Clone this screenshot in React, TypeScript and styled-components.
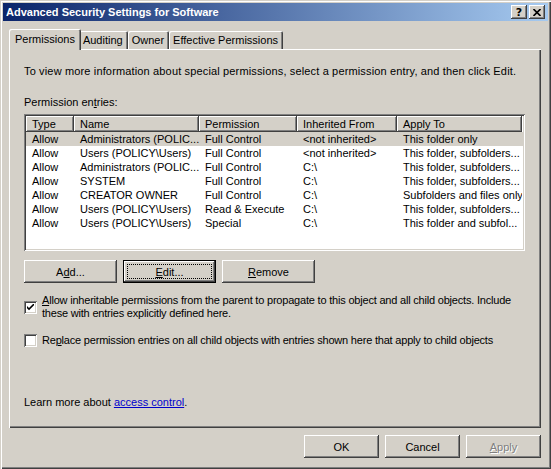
import React from "react";
import styled, { createGlobalStyle, css } from "styled-components";

const face = "#d4d0c8";
const raised = `inset -1px -1px #404040, inset 1px 1px #ffffff, inset -2px -2px #808080, inset 2px 2px ${face}`;
const sunken = `inset 1px 1px #808080, inset -1px -1px #ffffff, inset 2px 2px #404040, inset -2px -2px ${face}`;

const GlobalStyle = createGlobalStyle`
  html, body {
    margin: 0;
    padding: 0;
    background: ${face};
  }
  body {
    font-family: "Liberation Sans", Arial, sans-serif;
    font-size: 11px;
    color: #000;
  }
`;

type Entry = {
  type: string;
  name: string;
  permission: string;
  inherited: string;
  applyTo: string;
};

const entries: Entry[] = [
  { type: "Allow", name: "Administrators (POLIC...", permission: "Full Control", inherited: "<not inherited>", applyTo: "This folder only" },
  { type: "Allow", name: "Users (POLICY\\Users)", permission: "Full Control", inherited: "<not inherited>", applyTo: "This folder, subfolders..." },
  { type: "Allow", name: "Administrators (POLIC...", permission: "Full Control", inherited: "C:\\", applyTo: "This folder, subfolders..." },
  { type: "Allow", name: "SYSTEM", permission: "Full Control", inherited: "C:\\", applyTo: "This folder, subfolders..." },
  { type: "Allow", name: "CREATOR OWNER", permission: "Full Control", inherited: "C:\\", applyTo: "Subfolders and files only" },
  { type: "Allow", name: "Users (POLICY\\Users)", permission: "Read & Execute", inherited: "C:\\", applyTo: "This folder, subfolders..." },
  { type: "Allow", name: "Users (POLICY\\Users)", permission: "Special", inherited: "C:\\", applyTo: "This folder and subfol..." },
];

const columns = ["Type", "Name", "Permission", "Inherited From", "Apply To"];

const App = () => {
  return (
    <>
      <GlobalStyle />
      <Window>
        <TitleBar>
          <Title>Advanced Security Settings for Software</Title>
          <CaptionButton aria-label="Help">
            <HelpGlyph>?</HelpGlyph>
          </CaptionButton>
          <CaptionButton aria-label="Close" $gap>
            <svg width="8" height="7" viewBox="0 0 8 7">
              <path d="M0.5 0 L7.5 7 M7.5 0 L0.5 7" stroke="#000" strokeWidth="1.6" />
            </svg>
          </CaptionButton>
        </TitleBar>

        <Body>
          <TabStrip>
            <Tab $active>Permissions</Tab>
            <Tab>Auditing</Tab>
            <Tab>Owner</Tab>
            <Tab>Effective Permissions</Tab>
          </TabStrip>

          <Panel>
            <Intro>
              To view more information about special permissions, select a permission entry, and then click Edit.
            </Intro>
            <EntriesLabel>
              Permission en<u>t</u>ries:
            </EntriesLabel>

            <ListView>
              <ListRow>
                {columns.map((c) => (
                  <HeaderCell key={c}>{c}</HeaderCell>
                ))}
              </ListRow>
              {entries.map((e, i) => (
                <ListRow key={i} $selected={i === 0}>
                  <Cell>{e.type}</Cell>
                  <Cell>{e.name}</Cell>
                  <Cell>{e.permission}</Cell>
                  <Cell>{e.inherited}</Cell>
                  <Cell>{e.applyTo}</Cell>
                </ListRow>
              ))}
            </ListView>

            <ButtonRow>
              <PushButton $width={93}>
                A<u>d</u>d...
              </PushButton>
              <PushButton $width={93} $default>
                <u>E</u>dit...
              </PushButton>
              <PushButton $width={93}>
                <u>R</u>emove
              </PushButton>
            </ButtonRow>

            <CheckRow $top={11}>
              <CheckBox>
                <svg width="7" height="7" viewBox="0 0 7 7">
                  <path d="M0 2 L2 4 L7 -1 V1.2 L2 6.2 L0 4.2 Z" fill="#000" />
                </svg>
              </CheckBox>
              <CheckText>
                <u>A</u>llow inheritable permissions from the parent to propagate to this object and all child objects. Include
                <br />
                these with entries explicitly defined here.
              </CheckText>
            </CheckRow>

            <CheckRow $top={14}>
              <CheckBox />
              <CheckText>
                Re<u>p</u>lace permission entries on all child objects with entries shown here that apply to child objects
              </CheckText>
            </CheckRow>

            <LearnMore>
              Learn more about <Link href="#">access control</Link>.
            </LearnMore>
          </Panel>

          <Footer>
            <PushButton $width={75}>OK</PushButton>
            <PushButton $width={75}>Cancel</PushButton>
            <PushButton $width={75} disabled>
              <u>A</u>pply
            </PushButton>
          </Footer>
        </Body>
      </Window>
    </>
  );
};

const Window = styled.div`
  width: 551px;
  height: 469px;
  box-sizing: border-box;
  padding: 3px;
  background: ${face};
  box-shadow: inset 1px 1px ${face}, inset 2px 2px #ffffff, inset -1px -1px #404040, inset -2px -2px #808080;
  display: flex;
  flex-direction: column;
`;

const TitleBar = styled.div`
  height: 18px;
  flex: none;
  display: flex;
  align-items: center;
  padding: 0 3px 0 3px;
  background: linear-gradient(to right, #0a246a, #a6caf0);
  color: #fff;
  font-weight: bold;
  font-size: 11px;
`;

const Title = styled.span`
  flex: 1;
  white-space: nowrap;
  overflow: hidden;
`;

const CaptionButton = styled.button<{ $gap?: boolean }>`
  width: 16px;
  height: 14px;
  margin-left: ${(p) => (p.$gap ? "2px" : "0")};
  padding: 0;
  border: none;
  background: ${face};
  box-shadow: ${raised};
  display: flex;
  align-items: center;
  justify-content: center;
  color: #000;
`;

const HelpGlyph = styled.span`
  font-family: "DejaVu Sans", sans-serif;
  font-weight: bold;
  font-size: 11px;
  line-height: 11px;
`;

const Body = styled.div`
  flex: 1;
  display: flex;
  flex-direction: column;
  padding: 8px 7px 8px 6px;
`;

const TabStrip = styled.div`
  display: flex;
  align-items: flex-end;
  padding-left: 2px;
  height: 20px;
`;

const Tab = styled.div<{ $active?: boolean }>`
  box-sizing: border-box;
  height: 18px;
  padding: 2px 5px 0 4px;
  line-height: 14px;
  white-space: nowrap;
  background: ${face};
  border-radius: 2px 2px 0 0;
  box-shadow: inset 1px 1px #ffffff, inset -1px 0 #404040, inset -2px 0 #808080;

  ${(p) =>
    p.$active &&
    css`
      position: relative;
      z-index: 1;
      height: 21px;
      margin: 0 -2px -1px;
      padding: 3px 6px 0;
    `}
`;

const Panel = styled.div`
  flex: 1;
  display: flex;
  flex-direction: column;
  padding: 16px 16px 19px 15px;
  background: ${face};
  box-shadow: inset 1px 1px #ffffff, inset -1px -1px #404040, inset -2px -2px #808080;
`;

const Text = styled.div`
  line-height: 13px;
  white-space: nowrap;
`;

const Intro = styled(Text)`
  letter-spacing: 0.15px;
`;

const EntriesLabel = styled(Text)`
  margin-top: 18px;
`;

const ListView = styled.div`
  margin-top: 5px;
  height: 137px;
  box-sizing: border-box;
  padding: 2px;
  background: #fff;
  box-shadow: ${sunken};
  overflow: hidden;
`;

const ListRow = styled.div<{ $selected?: boolean }>`
  display: grid;
  grid-template-columns: 48px 125px 98px 100px 125px;
  background: ${(p) => (p.$selected ? face : "transparent")};
`;

const HeaderCell = styled.div`
  height: 16px;
  line-height: 16px;
  padding-left: 6px;
  background: ${face};
  box-shadow: inset -1px -1px #404040, inset 1px 1px #ffffff, inset -2px -2px #808080;
  white-space: nowrap;
  overflow: hidden;
`;

const Cell = styled.div`
  height: 14px;
  line-height: 14px;
  padding-left: 6px;
  white-space: nowrap;
  overflow: hidden;
`;

const ButtonRow = styled.div`
  display: flex;
  gap: 6px;
  margin-top: 9px;
`;

const PushButton = styled.button<{ $width: number; $default?: boolean }>`
  position: relative;
  width: ${(p) => p.$width}px;
  height: 23px;
  box-sizing: border-box;
  padding: 0;
  border: none;
  background: ${face};
  box-shadow: ${raised};
  font: inherit;
  color: #000;

  ${(p) =>
    p.$default &&
    css`
      border: 1px solid #000;

      &::after {
        content: "";
        position: absolute;
        inset: 3px;
        border: 1px dotted #000;
      }
    `}

  &:disabled {
    color: #808080;
    text-shadow: 1px 1px #ffffff;
  }
`;

const CheckRow = styled.div<{ $top: number }>`
  display: flex;
  align-items: center;
  gap: 5px;
  margin-top: ${(p) => p.$top}px;
`;

const CheckBox = styled.span`
  flex: none;
  width: 13px;
  height: 13px;
  background: #fff;
  box-shadow: ${sunken};
  display: flex;
  align-items: center;
  justify-content: center;
`;

const CheckText = styled.span`
  line-height: 13px;
  white-space: nowrap;
  letter-spacing: -0.2px;
`;

const LearnMore = styled(Text)`
  margin-top: auto;
`;

const Link = styled.a`
  color: #0000cc;
  text-decoration: underline;
`;

const Footer = styled.div`
  display: flex;
  justify-content: flex-end;
  gap: 6px;
  margin-top: 7px;
`;

export default App;
